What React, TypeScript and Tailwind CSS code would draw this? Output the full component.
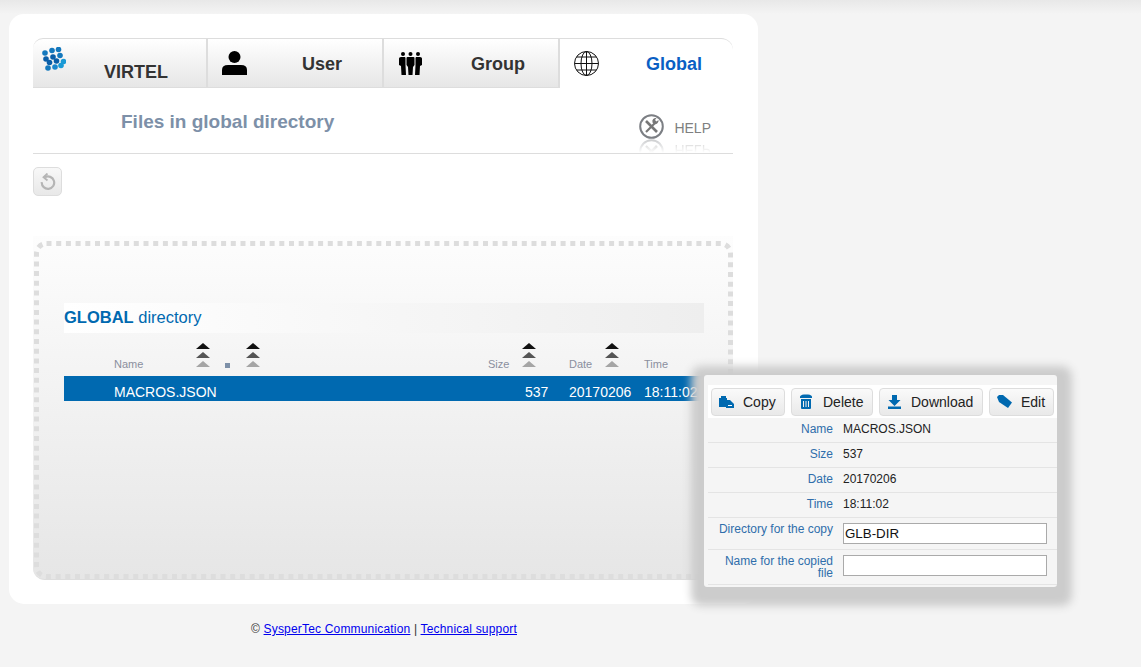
import type { ReactNode } from "react";

const logoDots = [
  [4, 6, "#1478bd"],
  [11, 3.5, "#1478bd"],
  [17.5, 2.5, "#1478bd"],
  [5, 12, "#0a5ea8"],
  [12, 10, "#0a5ea8"],
  [19, 8.5, "#1478bd"],
  [8.5, 15.5, "#0a5ea8"],
  [15.5, 14, "#0a5ea8"],
  [22.5, 14.5, "#1a9ad6"],
  [7, 21, "#1478bd"],
  [14, 20, "#1a86cc"],
  [20, 18.5, "#1a9ad6"],
] as const;

const SortArrows = () => (
  <svg width="14" height="24" viewBox="0 0 14 24" className="shrink-0">
    <path d="M7 0l7 6H0z" fill="#111" />
    <path d="M7 9l7 6H0z" fill="#555" />
    <path d="M7 18l7 6H0z" fill="#a5a5a5" />
  </svg>
);

const VirtelLogo = () => (
  <svg width="25" height="25" viewBox="0 0 25 25">
    {logoDots.map(([x, y, color]) => (
      <circle key={`${x}-${y}`} cx={x} cy={y} r="2.800" fill={color} />
    ))}
  </svg>
);

const UserIcon = () => (
  <svg width="25" height="24" viewBox="0 0 25 24">
    <circle cx="12.500" cy="6" r="6" fill="#000" />
    <path d="M0 24v-5q0-5 6-5h13q6 0 6 5v5z" fill="#000" />
  </svg>
);

const GroupIcon = () => (
  <svg width="23" height="23" viewBox="0 0 23 23" fill="#000">
    <circle cx="4" cy="2" r="2" />
    <circle cx="11.500" cy="2" r="2" />
    <circle cx="19" cy="2" r="2" />
    <path d="M0 6.500q0-1.500 2-1.500h4l.5 1v7l.5 10H2.500l-.5-9-2-1z" />
    <path d="M23 6.500q0-1.500-2-1.500h-4l-.5 1v7l-.5 10h4.500l.5-9 2-1z" />
    <path d="M7.500 6q0-1 1-1h6q1 0 1 1v7l-1.500 2-.5 8h-4l-.5-8-1.500-2z" />
  </svg>
);

const GlobeIcon = () => (
  <svg width="25" height="25" viewBox="0 0 25 25" fill="none" stroke="#111" strokeWidth="1">
    <circle cx="12.500" cy="12.500" r="12" />
    <ellipse cx="12.500" cy="12.500" rx="5.500" ry="12" />
    <path d="M12.500.5v24M.5 12.500h24M2.500 6h20M2.500 19h20" />
  </svg>
);

const HelpIcon = () => (
  <svg width="25" height="25" viewBox="0 0 25 25" fill="none">
    <circle cx="12.500" cy="12.500" r="11.300" stroke="#7c7f84" strokeWidth="2" />
    <path d="M7 7l11 11" stroke="#777" strokeWidth="2.600" />
    <path d="M17 8l-10 10" stroke="#777" strokeWidth="2.200" />
    <path d="M19.500 6a3.500 3.500 0 0 1-4.500 4l-1.500-1.500a3.500 3.500 0 0 1 4-4.500l-1.500 2 1.500 1.500z" fill="#777" />
  </svg>
);

const ResetIcon = () => (
  <svg width="16" height="17" viewBox="0 0 16 17" fill="none" stroke="#b5b5b5" strokeWidth="2.200">
    <path d="M5 4.200a6.200 6.200 0 1 1-3.200 5" />
    <path d="M7.500.5L3.500 4.200l4 3.300" strokeWidth="1.800" />
  </svg>
);

const CopyIcon = () => (
  <svg width="15" height="12" viewBox="0 0 15 12" fill="#0069b0">
    <path d="M0 2h2V0h5v2h1v9H0z" />
    <path d="M7 4h4l4 4v4H7z" />
    <path d="M9 9h4v1H9z" fill="#fff" />
  </svg>
);

const TrashIcon = () => (
  <svg width="12" height="15" viewBox="0 0 12 15" fill="#0069b0">
    <path d="M0 3q0-2 4-2.500h4q4 .5 4 2.500v1H0z" />
    <path d="M1 5h10v9q0 1-1 1H2q-1 0-1-1zM3 7v6h1V7zm2.500 0v6h1V7zM8 7v6h1V7z" fillRule="evenodd" />
  </svg>
);

const DownloadIcon = () => (
  <svg width="13" height="14" viewBox="0 0 13 14" fill="#0069b0">
    <path d="M4 0h5v5h3.500l-6 6-6-6H4z" />
    <path d="M0 11.500h13V14H0z" />
  </svg>
);

const TagIcon = () => (
  <svg width="15" height="13" viewBox="0 0 15 13" fill="#0069b0">
    <path d="M0 2l2-2h4l9 7.500-4 5.500L2 7z" />
  </svg>
);

const tabBase =
  "flex h-[50px] shrink-0 border-t border-b border-r-2 border-[#ddd] bg-gradient-to-b from-white to-[#e6e6e6] text-[18px] font-bold text-[#333]";

const HelpContent = () => (
  <div className="flex h-[25px] items-center gap-[10px]">
    <HelpIcon />
    <span className="pt-[4px] text-[14px] text-[#808080]">HELP</span>
  </div>
);

const ToolButton = ({ icon, label, width }: { icon: ReactNode; label: string; width: string }) => (
  <button
    className={`flex h-[28px] ${width} items-center gap-[9px] rounded-[4px] border border-[#ddd] bg-gradient-to-b from-[#fafafa] to-[#e9e9e9] pl-[6px] text-[14px] text-[#222]`}
  >
    <span className="flex w-[16px] justify-center">{icon}</span>
    <span className="pt-[2px]">{label}</span>
  </button>
);

const InfoRow = ({ label, value }: { label: string; value: string }) => (
  <div className="flex h-[25px] items-center border-b border-[#e4e4e4] pb-[2px]">
    <div className="w-[125px] text-right text-[#2f6eab]">{label}</div>
    <div className="pl-[10px] text-[#222]">{value}</div>
  </div>
);

const App = () => {
  return (
    <div className="relative h-[667px] overflow-hidden bg-[#f4f4f4] bg-[linear-gradient(#e8e8e8,#f4f4f4_14px)] pl-[9px] pt-[14px] font-['Liberation_Sans',Arial,sans-serif]">
      <div className="h-[590px] w-[749px] rounded-[15px] bg-white px-[24px] pt-[24px]">
        <div className="flex w-[700px]">
          <div className={`${tabBase} w-[175px] rounded-tl-[10px] pl-[8px] pt-[8px]`}>
            <VirtelLogo />
            <span className="ml-[38px] mt-[12px]">VIRTEL</span>
          </div>
          <div className={`${tabBase} w-[176px] items-center pl-[14px]`}>
            <UserIcon />
            <span className="ml-[55px] mt-[2px]">User</span>
          </div>
          <div className={`${tabBase} w-[176px] items-center pl-[15px]`}>
            <GroupIcon />
            <span className="ml-[49px] mt-[2px]">Group</span>
          </div>
          <div className="flex h-[50px] w-[173px] items-center rounded-tr-[12px] border-t border-[#ddd] bg-white pl-[14px] text-[18px] font-bold text-[#0a5fc4]">
            <GlobeIcon />
            <span className="ml-[47px] mt-[2px]">Global</span>
          </div>
        </div>

        <div className="flex h-[66px] w-[700px] justify-between border-b border-[#ddd]">
          <h1 className="pl-[88px] pt-[22px] text-[19px] font-bold leading-[24px] text-[#7d90a8]">Files in global directory</h1>
          <div className="mr-[22px] pt-[26px]">
            <HelpContent />
            <div className="h-[14px] overflow-hidden opacity-40 [mask-image:linear-gradient(#000,transparent)]">
              <div className="-scale-y-100">
                <HelpContent />
              </div>
            </div>
          </div>
        </div>

        <div className="h-[82px] pt-[13px]">
          <button className="flex h-[29px] w-[29px] items-center justify-center rounded-[5px] border border-[#ddd] bg-gradient-to-b from-[#f8f8f8] to-[#e8e8e8]">
            <ResetIcon />
          </button>
        </div>

        <div className="relative h-[344px] w-[700px] rounded-b-[12px] border-b border-[#ddd] bg-gradient-to-b from-[#fdfdfd] to-[#e6e6e6] pl-[31px] pr-[29px] pt-[67px]">
          <svg className="absolute left-0 top-0" width="700" height="344" fill="none">
            <rect x="3.500" y="7.500" width="694" height="333" rx="10" stroke="#ddd" strokeWidth="5" strokeDasharray="5 4.700" />
          </svg>

          <div className="relative">
            <div className="flex h-[30px] items-center bg-gradient-to-r from-white to-[#eee] pb-[2px] text-[16.500px] text-[#0069b0]">
              <span>
                <b>GLOBAL</b> directory
              </span>
            </div>

            <div className="grid h-[43px] grid-cols-[50px_374px_81px_75px_60px] items-start text-[11px] leading-[13px] text-[#8a8f9e]">
              <div />
              <div className="flex">
                <span className="mt-[25px] w-[82px]">Name</span>
                <div className="mt-[10px]">
                  <SortArrows />
                </div>
                <div className="ml-[15px] mt-[30px] h-[5px] w-[5px] bg-[#7d90a8]" />
                <div className="ml-[16px] mt-[10px]">
                  <SortArrows />
                </div>
              </div>
              <div className="flex">
                <span className="mt-[25px] w-[34px]">Size</span>
                <div className="mt-[10px]">
                  <SortArrows />
                </div>
              </div>
              <div className="flex">
                <span className="mt-[25px] w-[36px]">Date</span>
                <div className="mt-[10px]">
                  <SortArrows />
                </div>
              </div>
              <span className="mt-[25px]">Time</span>
            </div>

            <div className="grid h-[25px] grid-cols-[50px_374px_81px_75px_60px] items-center bg-[#0069b0] pt-[6px] text-[14px] text-white">
              <div />
              <span>MACROS.JSON</span>
              <span className="pl-[37px]">537</span>
              <span>20170206</span>
              <span className="whitespace-nowrap">18:11:02</span>
            </div>
          </div>
        </div>
      </div>

      <footer className="pl-[242px] pt-[18px] text-[12px] leading-[15px] tracking-[0.18px] text-[#333]">
        © <a className="text-[#0000ee] underline">SysperTec Communication</a> | <a className="text-[#0000ee] underline">Technical support</a>
      </footer>

      <div className="absolute left-[704px] top-[375px] h-[212px] w-[353px] rounded-[3px] bg-[#f5f5f5] pl-[4px] pt-[10px] text-[12px] shadow-[1px_5px_9px_14px_#ccc]">
        <div className="flex h-[33px] items-center gap-[6px] bg-white pl-[3px]">
          <ToolButton icon={<CopyIcon />} label="Copy" width="w-[74px]" />
          <ToolButton icon={<TrashIcon />} label="Delete" width="w-[82px]" />
          <ToolButton icon={<DownloadIcon />} label="Download" width="w-[104px]" />
          <ToolButton icon={<TagIcon />} label="Edit" width="w-[65px]" />
        </div>
        <InfoRow label="Name" value="MACROS.JSON" />
        <InfoRow label="Size" value="537" />
        <InfoRow label="Date" value="20170206" />
        <InfoRow label="Time" value="18:11:02" />
        <div className="flex h-[32px] border-b border-[#e4e4e4] pt-[5px]">
          <div className="w-[125px] text-right leading-[12px] text-[#2f6eab]">Directory for the copy</div>
          <input
            readOnly
            value="GLB-DIR"
            className="ml-[10px] h-[21px] w-[204px] border border-[#aaa] bg-white px-[1px] text-[13.333px] text-[#111]"
          />
        </div>
        <div className="flex h-[35px] border-b border-[#e4e4e4] pt-[5px]">
          <div className="w-[125px] text-right leading-[12px] text-[#2f6eab]">Name for the copied file</div>
          <input readOnly className="ml-[10px] h-[21px] w-[204px] border border-[#aaa] bg-white" />
        </div>
      </div>
    </div>
  );
};

export default App;
